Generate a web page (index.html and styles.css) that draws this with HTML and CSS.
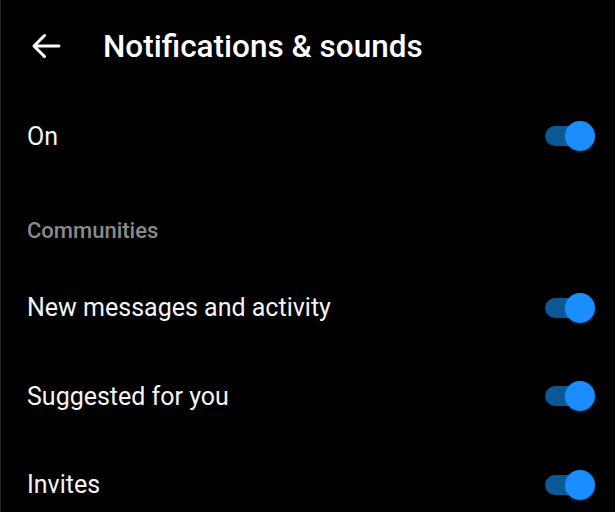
FILE: index.html
```html
<!DOCTYPE html>
<html lang="en">
  <head>
    <meta charset="UTF-8" />
    <meta name="viewport" content="width=device-width, initial-scale=1.0" />
    <title>Notifications &amp; sounds</title>
    <link rel="stylesheet" href="styles.css">
  </head>
  <body>
    <div class="screen">
      <div class="top-bar">
        <svg class="back" width="30" height="26" viewBox="0 0 30 26">
          <path d="M28 13H3M13.5 2.5L3 13l10.5 10.5" fill="none" stroke="#fff" stroke-width="3" stroke-linecap="round" stroke-linejoin="round" />
        </svg>
        <h1>Notifications &amp; sounds</h1>
      </div>

      <div class="row">
        <span>On</span>
        <div class="switch"><div class="knob"></div></div>
      </div>

      <div class="section">Communities</div>

      <div class="row">
        <span>New messages and activity</span>
        <div class="switch"><div class="knob"></div></div>
      </div>
      <div class="row">
        <span>Suggested for you</span>
        <div class="switch"><div class="knob"></div></div>
      </div>
      <div class="row">
        <span>Invites</span>
        <div class="switch"><div class="knob"></div></div>
      </div>
    </div>
  </body>
</html>
```

FILE: styles.css
```css
html,
body {
  margin: 0;
  background: #000;
}
body {
  font-family: Roboto, "Liberation Sans", sans-serif;
  color: #fff;
  overflow: hidden;
}
.screen {
  width: 615px;
  height: 512px;
  border-left: 1px solid #262626;
  box-sizing: border-box;
}
.top-bar {
  display: flex;
  align-items: center;
  height: 92px;
  padding-left: 30px;
}
.back {
  display: block;
}
.top-bar h1 {
  margin: 0 0 0 42px;
  font-size: 31.5px;
  font-weight: 500;
}
.row {
  display: flex;
  align-items: center;
  justify-content: space-between;
  height: 88.5px;
  padding: 0 20px 0 26px;
  font-size: 25px;
  color: #f4f4f4;
}
.section {
  height: 83px;
  box-sizing: border-box;
  padding: 37px 0 0 26px;
  font-size: 22px;
  font-weight: 500;
  color: #8a8a8a;
}
.switch {
  position: relative;
  width: 40px;
  height: 20px;
  border-radius: 10px;
  background: #0c5894;
  margin-right: 10px;
}
.knob {
  position: absolute;
  top: -5px;
  right: -10px;
  width: 30px;
  height: 30px;
  border-radius: 50%;
  background: #1a8dff;
  box-shadow: 0 1px 3px rgba(26, 141, 255, 0.35);
}
```
